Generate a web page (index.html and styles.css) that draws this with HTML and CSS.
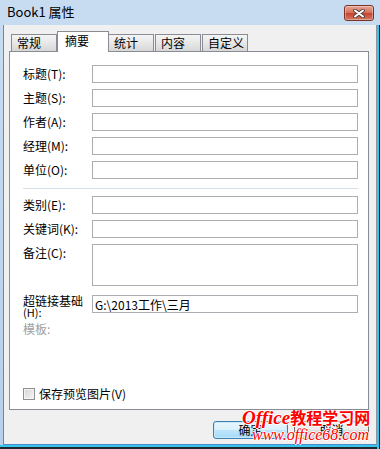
FILE: index.html
```html
<!DOCTYPE html>
<html lang="zh-CN">
<head>
    <meta charset="UTF-8">
    <title>Book1 属性</title>
    <link rel="stylesheet" href="styles.css">
</head>
<body>
<div class="window">
    <div class="titlebar">
        <span class="title">Book1 属性</span>
        <div class="close-btn">
            <svg width="12" height="9" viewBox="0 0 12 9">
                <path d="M2 1.5 L10 7.5 M10 1.5 L2 7.5" stroke="#4a3a38" stroke-width="3.6" stroke-linecap="round"/>
                <path d="M2 1.5 L10 7.5 M10 1.5 L2 7.5" stroke="#ffffff" stroke-width="2" stroke-linecap="round"/>
            </svg>
        </div>
    </div>

    <div class="frame">
        <div class="client">
            <!-- tab strip -->
            <div class="tabs">
                <div class="tab">常规</div>
                <div class="tab active">摘要</div>
                <div class="tab">统计</div>
                <div class="tab">内容</div>
                <div class="tab">自定义</div>
            </div>

            <div class="panel">
                <div class="fields">
                    <label>标题(T):</label><input class="field" type="text">
                    <label>主题(S):</label><input class="field" type="text">
                    <label>作者(A):</label><input class="field" type="text">
                    <label>经理(M):</label><input class="field" type="text">
                    <label>单位(O):</label><input class="field" type="text">

                    <div class="sep"></div>

                    <label>类别(E):</label><input class="field" type="text">
                    <label>关键词(K):</label><input class="field" type="text">
                    <label class="top">备注(C):</label><textarea class="field notes"></textarea>
                    <label class="two-line">超链接基础<br><span class="sub">(H):</span></label><input class="field top" type="text" value="G:\2013工作\三月">
                    <label class="disabled">模板:</label><span></span>
                </div>

                <div class="check">
                    <span class="box"></span>
                    <span>保存预览图片(V)</span>
                </div>
            </div>

            <div class="buttons">
                <button class="btn default">确定</button>
                <button class="btn">取消</button>
            </div>
        </div>
    </div>

    <div class="watermark">
        <div class="wm-line1"><span class="wm-latin">Office</span>教程学习网</div>
        <div class="wm-line2">www.office68.com</div>
    </div>
</div>
</body>
</html>
```

FILE: styles.css
```css
body {
    margin: 0;
    font-family: "Noto Sans CJK SC", sans-serif;
    font-size: 12px;
    color: #000;
}

.window {
    position: relative;
    width: 380px;
    height: 449px;
    display: flex;
    flex-direction: column;
    background: linear-gradient(#c8dcf1, #b7cfea);
    overflow: hidden;
}

.titlebar {
    height: 25px;
    flex: none;
    display: flex;
    align-items: center;
    justify-content: space-between;
    padding: 0 6px 0 7px;
}

.title {
    font-size: 13px;
    line-height: 16px;
    margin-top: -1px;
}

.close-btn {
    width: 30px;
    height: 16px;
    box-sizing: border-box;
    margin-top: 1px;
    border: 1px solid #7a3226;
    border-radius: 3px;
    background: linear-gradient(#e8a796, #d66f5a 48%, #c4452e 52%, #d27a62);
    box-shadow: inset 0 0 0 1px rgba(255, 255, 255, 0.35);
    display: flex;
    align-items: center;
    justify-content: center;
}

.frame {
    flex: 1;
    padding: 0 3px 4px 3px;
    box-shadow: inset -1px 0 #202830, inset -3px 0 #36c4ec,
                inset 0 -2px #202830, inset 0 -4px #36c4ec;
}

.client {
    height: 100%;
    box-sizing: border-box;
    background: #f0f0f0;
    border-left: 1px solid #5f8ab9;
    border-right: 1px solid #8d97a4;
    border-bottom: 1px solid #4a8ccc;
    padding: 6px 7px 0 5px;
}

/* tabs */
.tabs {
    position: relative;
    z-index: 2;
    height: 21px;
    display: flex;
    align-items: flex-end;
    margin-left: 2px;
}

.tab {
    width: 46px;
    height: 17px;
    box-sizing: border-box;
    margin-bottom: 1px;
    margin-right: 1px;
    padding-left: 5px;
    line-height: 16px;
    border: 1px solid #898c95;
    border-bottom: none;
    background: linear-gradient(#f4f4f4, #e6e6e6 55%, #d6d6d6);
}

.tab.active {
    width: 52px;
    height: 21px;
    margin: 0 -1px 0 -1px;
    padding-left: 7px;
    padding-top: 1px;
    background: #ffffff;
}

.panel {
    position: relative;
    z-index: 1;
    margin-top: -1px;
    height: 359px;
    box-sizing: border-box;
    border: 1px solid #898c95;
    background: #ffffff;
    padding: 13px 10px 9px 13px;
    display: flex;
    flex-direction: column;
}

.fields {
    display: grid;
    grid-template-columns: 69px 1fr;
    row-gap: 6px;
    align-items: center;
}

.fields label {
    line-height: 16px;
    white-space: nowrap;
}

.fields label.top {
    align-self: start;
    line-height: 18px;
}

.fields label.two-line {
    line-height: 11px;
}

.two-line .sub {
    font-size: 11px;
}

.fields label.disabled {
    color: #a0a0a0;
    line-height: 14px;
    margin-top: -2px;
}

.field {
    height: 18px;
    box-sizing: border-box;
    margin: 0;
    border: 1px solid #abadb3;
    padding: 0 2px;
    font-family: "Noto Sans CJK SC", sans-serif;
    font-size: 12px;
    background: #fff;
    outline: none;
}

.field.top {
    align-self: start;
}

.notes {
    height: 42px;
    resize: none;
    margin-bottom: 3px;
}

.sep {
    grid-column: span 2;
    height: 1px;
    margin: 3px 0 1px;
    background: #d5dfe5;
}

.check {
    margin-top: auto;
    display: flex;
    align-items: center;
    gap: 4px;
    line-height: 13px;
}

.box {
    width: 12px;
    height: 12px;
    box-sizing: border-box;
    border: 1px solid #8e8f8f;
    background: linear-gradient(135deg, #d4d4d4, #f6f6f6);
    box-shadow: inset 0 0 0 1px #f4f4f4;
}

/* dialog buttons */
.buttons {
    display: flex;
    justify-content: flex-end;
    gap: 6px;
    margin-top: 11px;
}

.btn {
    width: 75px;
    height: 18px;
    padding: 0;
    border: 1px solid #707070;
    border-radius: 3px;
    font-family: "Noto Sans CJK SC", sans-serif;
    font-size: 12px;
    line-height: 14px;
    color: #000;
    background: linear-gradient(#f2f2f2, #ebebeb 50%, #dddddd 50%, #cfcfcf);
}

.btn.default {
    border-color: #3c7fb1;
    background: linear-gradient(#eaf6fd, #d9f0fc 50%, #bee6fd 50%, #a7d9f5);
    box-shadow: inset 0 0 0 1px #c4eafc;
}

/* site watermark over the corner */
.watermark {
    position: absolute;
    left: 242px;
    top: 408px;
    color: #ff0000;
    font-weight: bold;
    text-shadow: 1px 0 #fff, -1px 0 #fff, 0 1px #fff, 0 -1px #fff;
    white-space: nowrap;
}

.wm-line1 {
    font-size: 16px;
    line-height: 19px;
    font-family: "Noto Sans CJK SC", sans-serif;
}

.wm-latin {
    font-family: "Liberation Serif", serif;
    font-style: italic;
    font-size: 19px;
}

.wm-line2 {
    margin-left: 10px;
    font-family: "Liberation Serif", serif;
    font-style: italic;
    font-weight: normal;
    font-size: 16px;
    line-height: 15px;
}
```
